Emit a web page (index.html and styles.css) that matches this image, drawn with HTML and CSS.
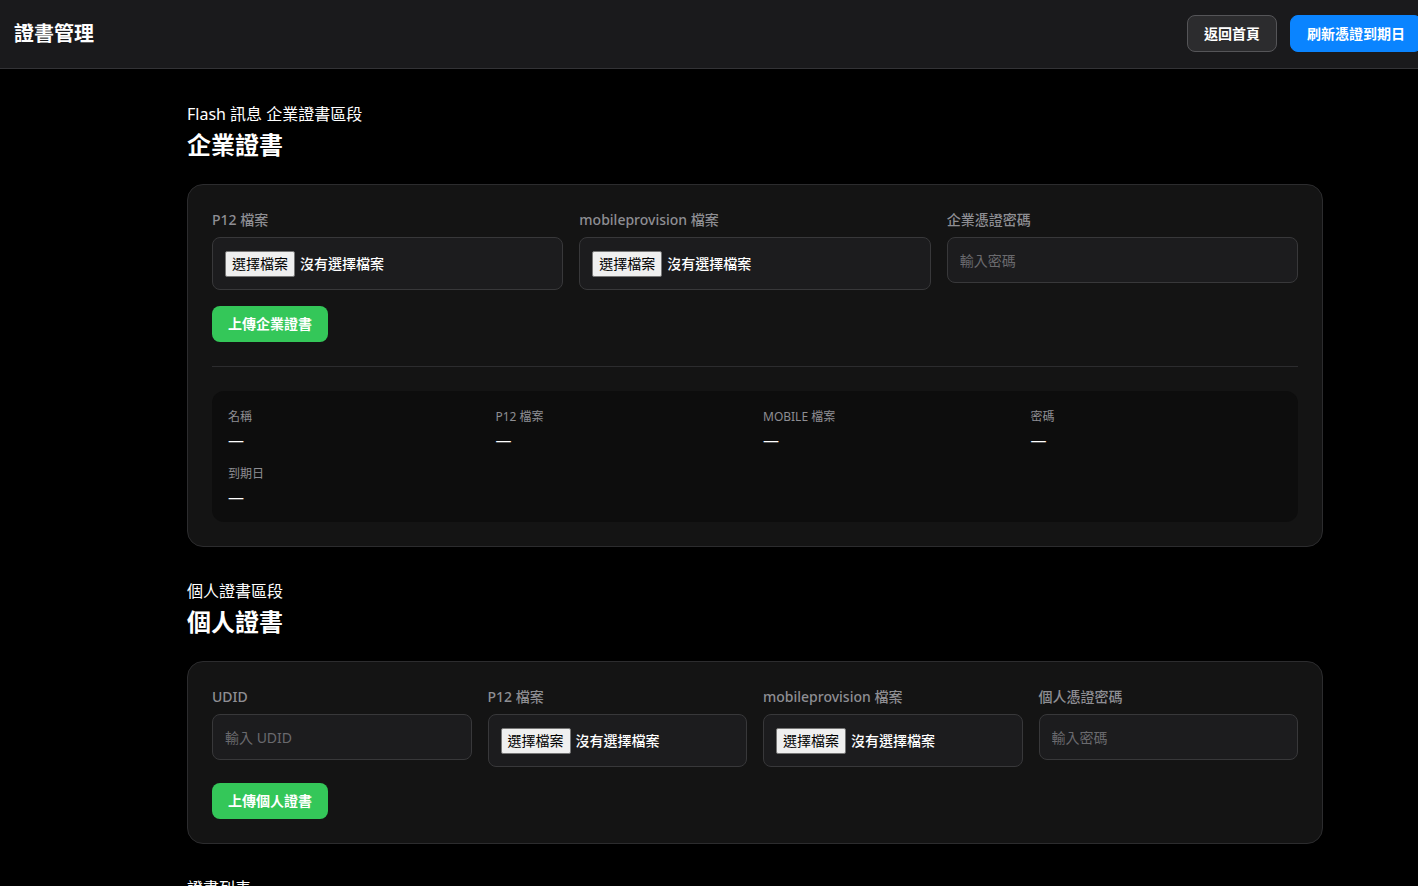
FILE: index.html
```html
<!DOCTYPE html>
<html lang="zh-Hant">
<head>
<meta charset="utf-8">
<title>證書管理</title>
<link rel="stylesheet" href="styles.css">
</head>
<body>
<header class="topbar">
  <h1 class="brand">證書管理</h1>
  <div class="actions">
    <button class="btn btn-ghost">返回首頁</button>
    <button class="btn btn-blue">刷新憑證到期日</button>
  </div>
</header>

<main class="main">
  <section class="section">
    <div class="section-kicker">Flash 訊息 企業證書區段</div>
    <h2 class="section-title">企業證書</h2>
    <div class="card">
      <div class="form-grid cols-3">
        <div class="field">
          <label class="label">P12 檔案</label>
          <div class="file-input"><span class="file-btn">選擇檔案</span><span class="file-name">沒有選擇檔案</span></div>
        </div>
        <div class="field">
          <label class="label">mobileprovision 檔案</label>
          <div class="file-input"><span class="file-btn">選擇檔案</span><span class="file-name">沒有選擇檔案</span></div>
        </div>
        <div class="field">
          <label class="label">企業憑證密碼</label>
          <input class="text-input" type="password" placeholder="輸入密碼">
        </div>
      </div>
      <button class="btn btn-green">上傳企業證書</button>
      <hr class="divider">
      <div class="details">
        <div class="detail"><div class="detail-label">名稱</div><div class="detail-value">—</div></div>
        <div class="detail"><div class="detail-label">P12 檔案</div><div class="detail-value">—</div></div>
        <div class="detail"><div class="detail-label">MOBILE 檔案</div><div class="detail-value">—</div></div>
        <div class="detail"><div class="detail-label">密碼</div><div class="detail-value">—</div></div>
        <div class="detail"><div class="detail-label">到期日</div><div class="detail-value">—</div></div>
      </div>
    </div>
  </section>

  <section class="section">
    <div class="section-kicker">個人證書區段</div>
    <h2 class="section-title">個人證書</h2>
    <div class="card">
      <div class="form-grid cols-4">
        <div class="field">
          <label class="label">UDID</label>
          <input class="text-input" type="text" placeholder="輸入 UDID">
        </div>
        <div class="field">
          <label class="label">P12 檔案</label>
          <div class="file-input"><span class="file-btn">選擇檔案</span><span class="file-name">沒有選擇檔案</span></div>
        </div>
        <div class="field">
          <label class="label">mobileprovision 檔案</label>
          <div class="file-input"><span class="file-btn">選擇檔案</span><span class="file-name">沒有選擇檔案</span></div>
        </div>
        <div class="field">
          <label class="label">個人憑證密碼</label>
          <input class="text-input" type="password" placeholder="輸入密碼">
        </div>
      </div>
      <button class="btn btn-green">上傳個人證書</button>
    </div>
  </section>

  <section class="section">
    <div class="section-kicker">證書列表</div>
  </section>
</main>
</body>
</html>
```

FILE: styles.css
```css
* { box-sizing: border-box; }

html, body {
  margin: 0;
  padding: 0;
  background: #000;
  color: #fff;
  font-family: "Noto Sans", "Noto Sans CJK TC", sans-serif;
  overflow: hidden;
}

.topbar {
  height: 69px;
  background: #1a1a1c;
  border-bottom: 1px solid #333336;
  display: flex;
  align-items: center;
  justify-content: space-between;
  padding: 0 0 0 14px;
}

.brand {
  margin: 0;
  font-size: 20px;
  font-weight: 700;
  line-height: 28px;
}

.actions {
  display: flex;
  gap: 13px;
  margin-right: -4px;
  margin-bottom: 2px;
  flex-shrink: 0;
}

.btn {
  font-family: inherit;
  font-size: 14px;
  font-weight: 700;
  line-height: 19px;
  padding: 8px 16px;
  border-radius: 8px;
  color: #fff;
  cursor: pointer;
  white-space: nowrap;
}

.btn-ghost {
  background: #2c2c2e;
  border: 1px solid #555558;
}

.btn-blue {
  background: #0a84ff;
  border: 1px solid #0a84ff;
}

.btn-green {
  background: #34c759;
  border: 0;
  padding: 8px 16px;
  line-height: 20px;
  margin-top: 16px;
  display: block;
}

.main {
  margin-left: 187px;
  width: 1136px;
  padding-top: 33px;
}

.section { margin-bottom: 32px; }

.section-kicker {
  font-size: 16px;
  line-height: 24px;
}

.section-title {
  margin: 4px 0 24px;
  font-size: 24px;
  font-weight: 700;
  line-height: 30px;
}

.card {
  background: #141414;
  border: 1px solid #2c2c2e;
  border-radius: 16px;
  padding: 24px;
}

.form-grid {
  display: grid;
  gap: 16px;
  align-items: start;
}
.cols-3 { grid-template-columns: repeat(3, 1fr); }
.cols-4 { grid-template-columns: repeat(4, 1fr); }

.field { display: flex; flex-direction: column; }

.label {
  font-size: 14px;
  font-weight: 500;
  line-height: 22px;
  color: #8e8e93;
  margin-bottom: 6px;
}

.file-input {
  background: #1c1c1e;
  border: 1px solid #38383a;
  border-radius: 8px;
  padding: 12px;
  display: flex;
  align-items: center;
  height: 53px;
}

.file-btn {
  background: #efefef;
  color: #000;
  border: 1px solid #767676;
  border-radius: 2px;
  font-size: 14px;
  line-height: 20px;
  padding: 2px 6px;
  height: 26px;
  margin-right: 5px;
}

.file-name {
  font-size: 14px;
  font-weight: 500;
  color: #fff;
  line-height: 20px;
}

.text-input {
  background: #1c1c1e;
  border: 1px solid #38383a;
  border-radius: 8px;
  padding: 12px;
  height: 46px;
  font-family: inherit;
  font-size: 14px;
  line-height: 19px;
  color: #fff;
  outline: none;
  width: 100%;
}
.text-input::placeholder { color: #6a6a6e; }

.divider {
  border: 0;
  border-top: 1px solid #2c2c2e;
  margin: 24px 0;
}

.details {
  background: #0d0d0d;
  border-radius: 12px;
  padding: 17px 16px 15px;
  display: grid;
  grid-template-columns: repeat(4, 1fr);
  column-gap: 16px;
  row-gap: 15px;
}

.detail-label {
  font-size: 12px;
  line-height: 18px;
  color: #8e8e93;
  margin-bottom: 4px;
}

.detail-value {
  font-size: 16px;
  line-height: 20px;
  color: #fff;
}
```
